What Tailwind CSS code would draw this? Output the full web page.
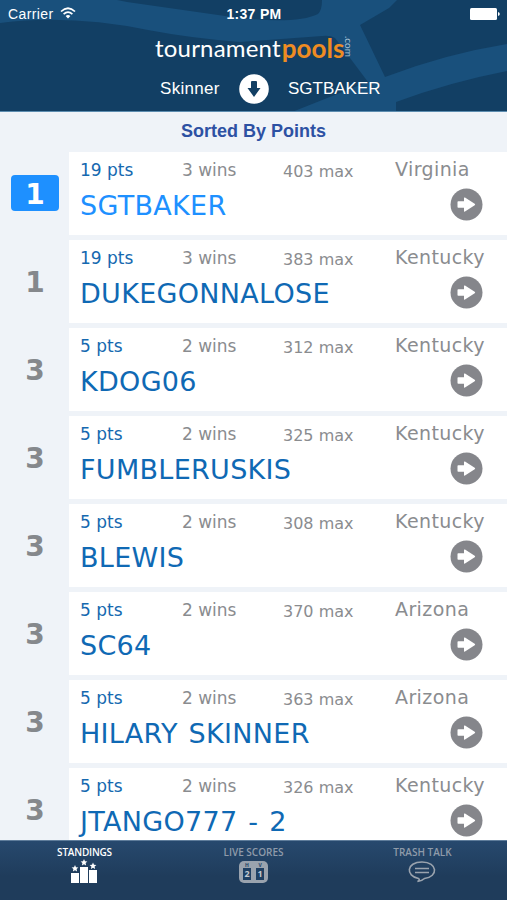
<!DOCTYPE html>
<html lang="en">
<head>
  <meta charset="UTF-8" />
  <meta name="viewport" content="width=device-width, initial-scale=1.0"/>
  <title>Tournament Pools - Standings</title>
  <script src="https://cdn.jsdelivr.net/npm/@tailwindcss/browser@4"></script>
</head>
<body class="w-[507px] h-[900px] overflow-hidden flex flex-col bg-[#eff3f8] font-['Liberation_Sans',sans-serif]">

  <header class="relative h-[112px] shrink-0 bg-[#123f64] text-white border-b border-[#5d8db0] overflow-hidden">
    <!-- basketball seams behind the header -->
    <svg class="absolute inset-0" width="507" height="112" viewBox="0 0 507 112" fill="#19507c">
      <path d="M0 0H117L127 2L232 17Q295 25 318 14Q322 10 322 0H397L389 8L360 25L385 77Q445 54 507 44V71Q450 82 396 102V112H292L355 87L368 82L335 38Q330 35 322 36L240 42Q190 38 148 30Q70 14 0 23Z"/>
    </svg>

    <div class="relative h-7 flex items-center justify-between pl-2 pr-[7px] text-[14px]">
      <div class="w-[100px] flex items-center gap-[6px]">
        <span class="tracking-[0.4px]">Carrier</span>
        <svg class="-mt-[2px]" width="16" height="12" viewBox="0 0 16 12" fill="none" stroke="#fff" stroke-width="1.7">
          <path d="M1 4.5Q8 -2 15 4.5M3.6 7.1Q8 3 12.400 7.1"/>
          <path d="M5.600 9Q8 7 10.400 9L8 11.500Z" fill="#fff" stroke="none"/>
        </svg>
      </div>
      <span class="font-bold text-[14px] tracking-[0.3px]">1:37 PM</span>
      <div class="w-[100px] flex items-center justify-end">
        <svg width="30" height="12" viewBox="0 0 30 12" fill="#fff">
          <rect width="27" height="12" rx="1.500"/>
          <path d="M28 4Q29.800 4.500 29.800 6T28 8Z"/>
        </svg>
      </div>
    </div>

    <div class="relative h-[40px] pl-[155px] flex items-center font-['Lato',sans-serif] leading-none">
      <span class="text-[24px] tracking-[0.2px]">tournament</span>
      <span class="text-[26px] font-bold text-[#ee8c22] ml-px">pools</span>
      <span class="text-[10px] text-[#a9c3d8] [writing-mode:vertical-rl] mb-1">.com</span>
    </div>

    <div class="relative h-10 pt-px flex items-center text-[17px] pl-[160px]">
      <span class="w-[79px] tracking-[0.3px]">Skinner</span>
      <svg width="30" height="30" viewBox="0 0 30 30">
        <circle cx="15" cy="15" r="14.800" fill="#fff"/>
        <path d="M12 8q0-1 1-1h4q1 0 1 1v6h3.500l-6.500 9l-6.500-9H12z" fill="#123f64"/>
      </svg>
      <span class="ml-[19px]">SGTBAKER</span>
    </div>
  </header>

  <h1 class="h-10 shrink-0 flex items-center justify-center text-[18px] font-bold text-[#2d51a3] pb-[2px]">Sorted By Points</h1>

  <main id="standings" class="flex-1 min-h-0 overflow-hidden font-['DejaVu_Sans',sans-serif]"></main>

  <nav class="h-[60px] shrink-0 grid grid-cols-3 border-t border-[#5f7d9b] bg-gradient-to-b from-[#27496e] to-[#1f3c5b] to-60% font-['Open_Sans',sans-serif] text-[10px] font-semibold text-[#8f9baa]">
    <a class="flex flex-col items-center pt-1 text-white">
      <span class="tracking-[-0.2px]">STANDINGS</span>
      <svg class="-mt-[2px] -ml-[2px]" width="28" height="26" viewBox="0 0 28 26" fill="#fff">
        <path d="M1 15h8v10H1zM10 9h8v16h-8zM19 12h8v13h-8z"/>
        <path d="M5 7l1 2.200 2.400.3-1.800 1.600.5 2.400L5 12.300l-2.100 1.200.5-2.400-1.800-1.600L4 9.200zM14 1l1 2.200 2.400.3-1.800 1.600.5 2.400L14 6.300l-2.100 1.200.5-2.400-1.800-1.600L13 3.200zM23 4.500l1 2.200 2.400.3-1.800 1.600.5 2.400L23 9.800 20.900 11l.5-2.400L19.600 7l2.400-.3z"/>
      </svg>
    </a>
    <a class="flex flex-col items-center pt-1">
      <span>LIVE SCORES</span>
      <div class="mt-px w-[29px] h-[22px] rounded-[5px] bg-[#9aa3ae] pt-px px-1 grid grid-cols-2 gap-[5px] justify-items-center text-center font-bold text-[#1f4063]">
        <div class="flex flex-col w-2">
          <span class="h-[6px] text-[5px] leading-[6px]">H</span>
          <span class="h-[12px] text-[9px] leading-[12px] bg-[#1f4063] text-[#c3c9d1]">2</span>
        </div>
        <div class="flex flex-col w-2">
          <span class="h-[6px] text-[5px] leading-[6px]">V</span>
          <span class="h-[12px] text-[9px] leading-[12px] bg-[#1f4063] text-[#c3c9d1]">1</span>
        </div>
      </div>
    </a>
    <a class="flex flex-col items-center pt-1">
      <span>TRASH TALK</span>
      <svg class="mt-px -ml-px" width="28" height="22" viewBox="0 0 28 22" fill="none" stroke="#9aa3ae" stroke-width="1.600">
        <path d="M10.500 17.500C-2.500 15-2 1 14 1S30.500 16 16.500 17.500Q14 20 9.500 20.500Q12.500 19 10.500 17.500Z"/>
        <path d="M7 7.500h14M7 11.500h14"/>
      </svg>
    </a>
  </nav>

  <script>
    const players = [
      { rank: 1, pts: 19, wins: 3, max: 403, pick: "Virginia", name: "SGTBAKER", me: true },
      { rank: 1, pts: 19, wins: 3, max: 383, pick: "Kentucky", name: "DUKEGONNALOSE" },
      { rank: 3, pts: 5, wins: 2, max: 312, pick: "Kentucky", name: "KDOG06" },
      { rank: 3, pts: 5, wins: 2, max: 325, pick: "Kentucky", name: "FUMBLERUSKIS" },
      { rank: 3, pts: 5, wins: 2, max: 308, pick: "Kentucky", name: "BLEWIS" },
      { rank: 3, pts: 5, wins: 2, max: 370, pick: "Arizona", name: "SC64" },
      { rank: 3, pts: 5, wins: 2, max: 363, pick: "Arizona", name: "HILARY SKINNER" },
      { rank: 3, pts: 5, wins: 2, max: 326, pick: "Kentucky", name: "JTANGO777 - 2" }
    ];

    document.getElementById('standings').innerHTML = players.map(p => `
      <div class="h-[88px] flex">
        <div class="w-[69px] pl-[11px] pt-[23px]">
          <div class="w-[48px] h-9 pt-[3px] rounded flex items-center justify-center text-[28px] font-bold ${p.me ? 'bg-[#1e90ff] text-white' : 'text-[#85888c]'}">${p.rank}</div>
        </div>
        <div class="flex-1 h-[83px] bg-white pl-[11px]">
          <div class="h-9 pt-[2px] grid grid-cols-[102px_102px_111px_1fr] items-center text-[17px] text-[#8a8c8f] whitespace-nowrap">
            <span class="text-[#1569b0]">${p.pts} pts</span>
            <span>${p.wins} wins</span>
            <span class="text-[16px] pt-[1px] -ml-px">${p.max} max</span>
            <span class="text-[19px] pb-[3px] tracking-[0.4px]">${p.pick}</span>
          </div>
          <div class="h-[33px] flex items-center justify-between pr-6">
            <span class="pt-[3px] text-[27px] tracking-[0.3px] [word-spacing:2px] whitespace-nowrap ${p.me ? 'text-[#1e90ff]' : 'text-[#0f69b4]'}">${p.name}</span>
            <svg width="33" height="33" viewBox="0 0 33 33">
              <circle cx="16.500" cy="16.500" r="16" fill="#85868b"/>
              <path d="M7.500 14q0-.8.8-.8H14V10q0-1 1-.4l9.700 6.100q1 .8 0 1.600L15 23.400q-1 .6-1-.4v-3.200H8.300q-.8 0-.8-.8z" fill="#fff"/>
            </svg>
          </div>
        </div>
      </div>
    `).join('');
  </script>
</body>
</html>
